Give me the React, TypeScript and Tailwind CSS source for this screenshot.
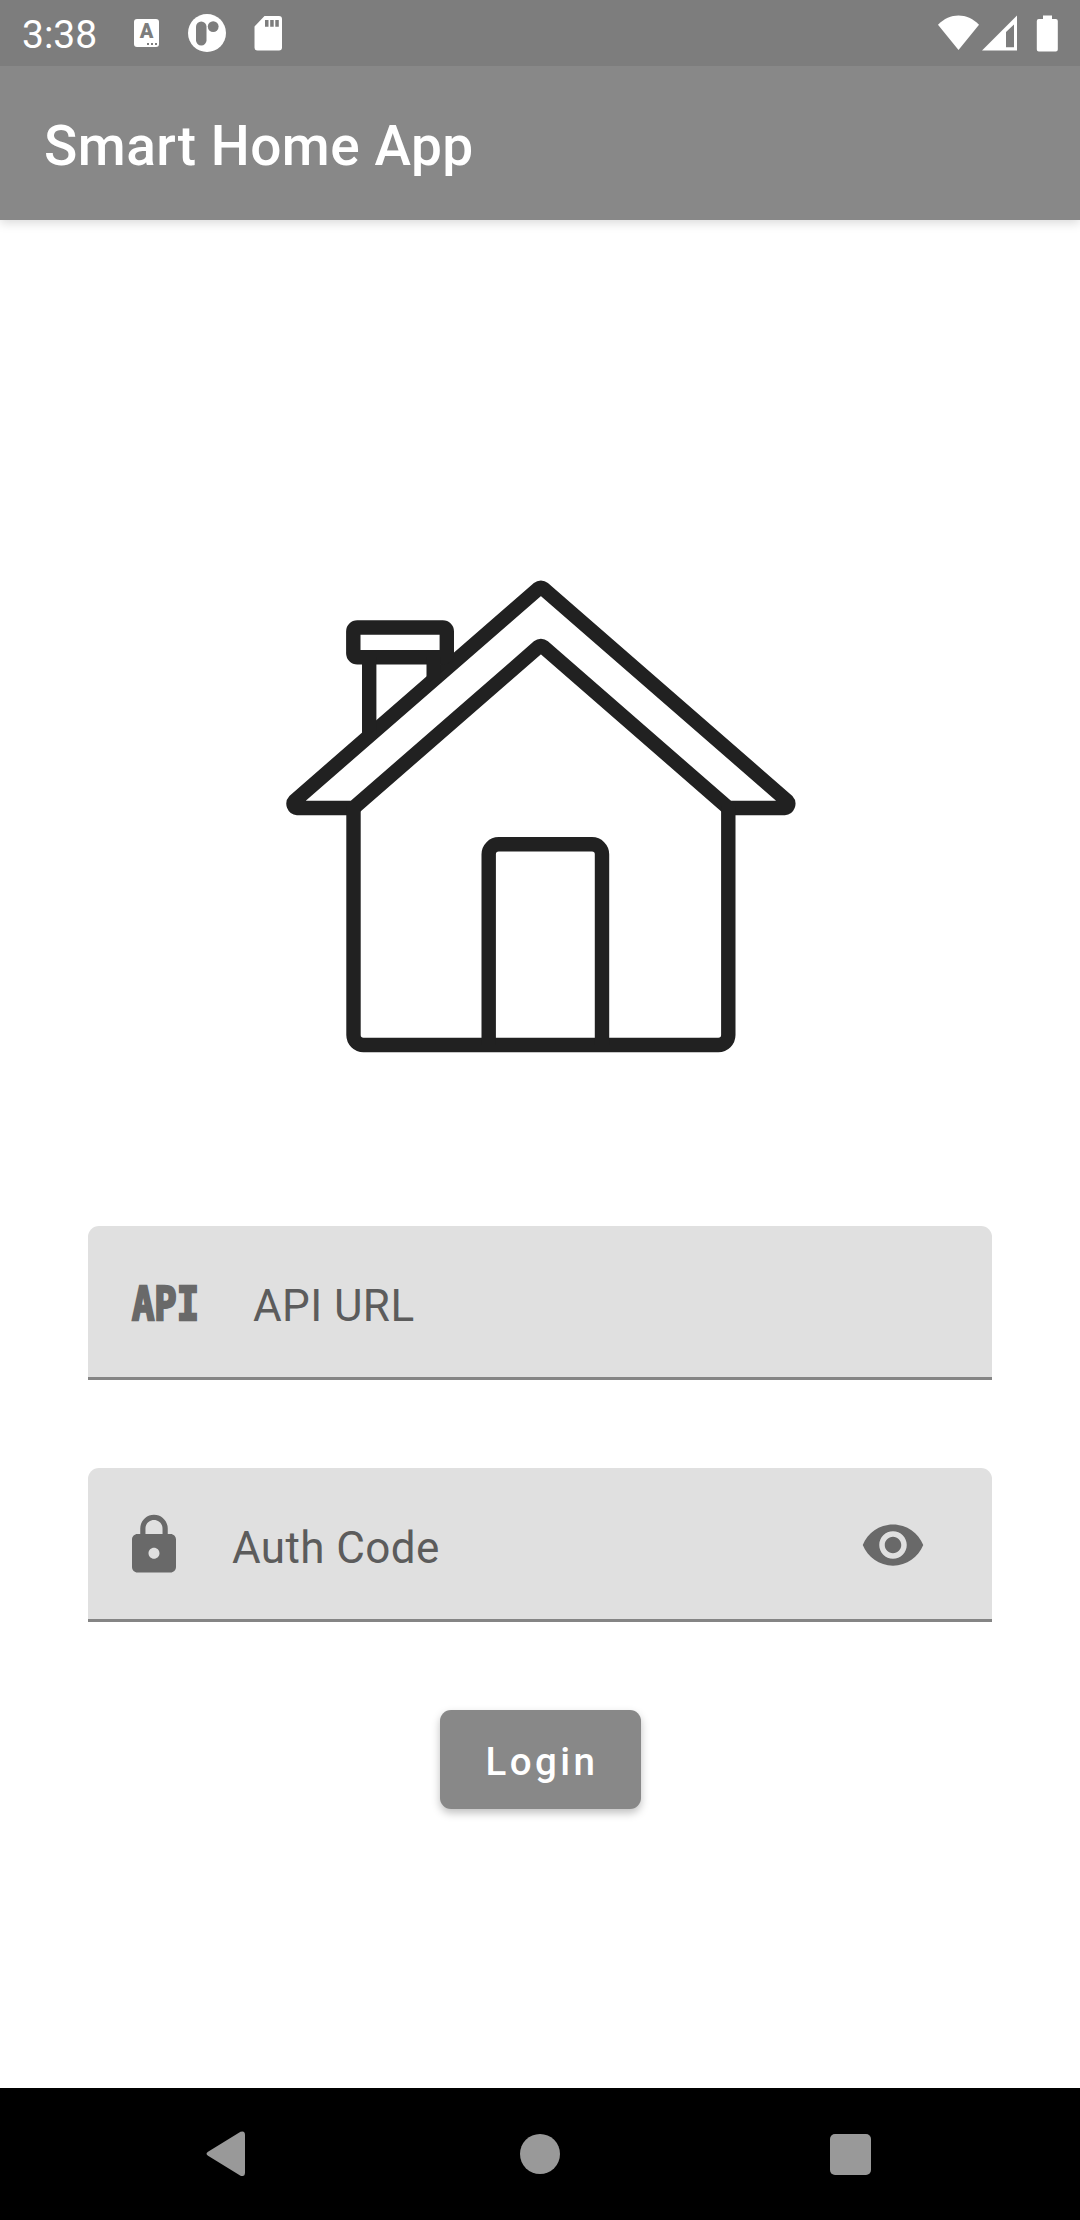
import type { ReactNode } from "react";
import { MdLock, MdVisibility } from "react-icons/md";

function StatusBar() {
  return (
    <div className="relative z-10 flex h-[66px] shrink-0 items-center bg-[#7d7d7d] text-white">
      <span className="ml-[22px] mt-[4px] w-[112px] text-[39px] leading-[46px]">3:38</span>
      <div className="flex h-[28px] w-[25px] flex-col items-center rounded-[3px] bg-white">
        <span className="mt-[2px] text-[20px] leading-[20px] font-black text-[#7d7d7d]">A</span>
        <div className="flex gap-[2px] self-end pt-[2px] pr-[2px]">
          <i className="size-[2px] bg-[#7d7d7d]" />
          <i className="size-[2px] bg-[#7d7d7d]" />
          <i className="size-[2px] bg-[#7d7d7d]" />
        </div>
      </div>
      <svg className="ml-[29px] h-[38px] w-[38px]" viewBox="0 0 38 38">
        <circle cx="19" cy="19" r="19" fill="#fff" />
        <rect x="8" y="7.5" width="10.5" height="24" rx="5.25" fill="#7d7d7d" />
        <circle cx="25.2" cy="12.6" r="5.4" fill="#7d7d7d" />
      </svg>
      <svg className="ml-[28px] h-[35px] w-[28px]" viewBox="0 0 28 35">
        <path d="M10.500 0H25a3 3 0 0 1 3 3v28.500a3 3 0 0 1-3 3H3.500a3 3 0 0 1-3-3V10.500Z" fill="#fff" />
        <path d="M11 4h3.500v6.700H11ZM16.200 4h3.500v6.700h-3.500ZM21.300 4h3.500v6.700h-3.500Z" fill="#7d7d7d" />
      </svg>
      <svg className="mr-[21px] ml-auto h-[37px] w-[121px]" viewBox="0 0 121 37">
        <g fill="#fff">
          <path d="M20.500 35 0 9.700C12-2.600 29-2.600 41 9.700Z" />
          <path fillRule="evenodd" d="M79 .500V35.500H44ZM76 9.500 68 17V32.200H76Z" />
          <path d="M105 .600h9V4h3.800a2 2 0 0 1 2 2v28.500a2 2 0 0 1-2 2h-17a2 2 0 0 1-2-2V6a2 2 0 0 1 2-2H105Z" />
        </g>
      </svg>
    </div>
  );
}

function House() {
  return (
    <svg
      className="mt-[353px] h-[486px] w-[520px] self-center"
      viewBox="280 573 520 486"
      fill="none"
      stroke="#212121"
      strokeWidth="14.4"
    >
      {/* roof */}
      <path d="M538.600 588.500A3.500 3.500 0 0 1 543.200 588.500L787.100 800.800A4.300 4.300 0 0 1 784.300 808H728.300L543.200 646.800A3.500 3.500 0 0 0 538.600 646.800L353.500 808H297.500A4.300 4.300 0 0 1 294.700 800.800Z" />
      {/* walls */}
      <path d="M353.500 806V1035A10 10 0 0 0 363.500 1045H718.300A10 10 0 0 0 728.300 1035V806" />
      {/* door */}
      <path d="M488.700 1045V854.300A10 10 0 0 1 498.700 844.300H592A10 10 0 0 1 602 854.300V1045" />
      {/* chimney */}
      <rect x="353.300" y="627.500" width="93.500" height="29.800" rx="4" />
      <path d="M369.200 657V735M433.700 657V680" />
    </svg>
  );
}

function Field({ icon, label, trailing }: { icon: ReactNode; label: string; trailing?: ReactNode }) {
  return (
    <div className="flex h-[154px] items-center rounded-t-[11px] border-b-[3px] border-[#858585] bg-[#e0e0e0] px-[33px] text-[#696969]">
      {icon}
      <span className="mt-[9px] flex-1 text-[44px] leading-[52px] tracking-[0.4px] text-[#5c5c5c]">{label}</span>
      {trailing}
    </div>
  );
}

function NavBar() {
  return (
    <div className="flex h-[132px] shrink-0 items-center bg-black">
      <svg className="ml-[206px] h-[46px] w-[40px]" viewBox="0 0 40 46">
        <path d="M2 20.800 34.500.800Q39 -.800 39 4V41.500Q39 46.300 34.500 44.700L2 24.800Q-1 22.800 2 20.800Z" fill="#999" />
      </svg>
      <div className="ml-[274px] size-[40px] rounded-full bg-[#999]" />
      <div className="mt-px ml-[270px] size-[41px] rounded-[5px] bg-[#999]" />
    </div>
  );
}

export default function App() {
  return (
    <div className="flex h-[2220px] w-[1080px] flex-col overflow-hidden bg-white font-['Roboto',sans-serif]">
      <StatusBar />
      <header className="flex h-[154px] shrink-0 items-center bg-[#888888] pl-[44px] text-white shadow-[0_3px_10px_rgba(0,0,0,0.15)]">
        <h1 className="mt-[6px] text-[55px] leading-[64px] font-medium tracking-[0.5px]">Smart Home App</h1>
      </header>
      <main className="flex flex-1 flex-col">
        <House />
        <div className="mt-[167px] flex flex-col gap-[88px] px-[88px]">
          <Field
            icon={
              <span className="mr-[54px] ml-[11px] w-[67px] pt-[5px]">
                <span className="inline-block origin-left scale-x-[0.79] font-['DejaVu_Sans_Mono',monospace] text-[47px] leading-[56px] font-bold [-webkit-text-stroke:2.5px_#696969]">
                  API
                </span>
              </span>
            }
            label="API URL"
          />
          <Field
            icon={<MdLock className="mt-[3px] mr-[45px] size-[66px]" />}
            label="Auth Code"
            trailing={<MdVisibility className="mt-[3px] mr-[33px] size-[66px]" />}
          />
        </div>
        <button className="mt-[88px] h-[99px] w-[201px] self-center rounded-[11px] bg-[#888888] pt-[4px] pl-[4px] text-[38.5px] font-medium tracking-[3.44px] text-white shadow-[0_4px_8px_rgba(0,0,0,0.25)]">
          Login
        </button>
      </main>
      <NavBar />
    </div>
  );
}
